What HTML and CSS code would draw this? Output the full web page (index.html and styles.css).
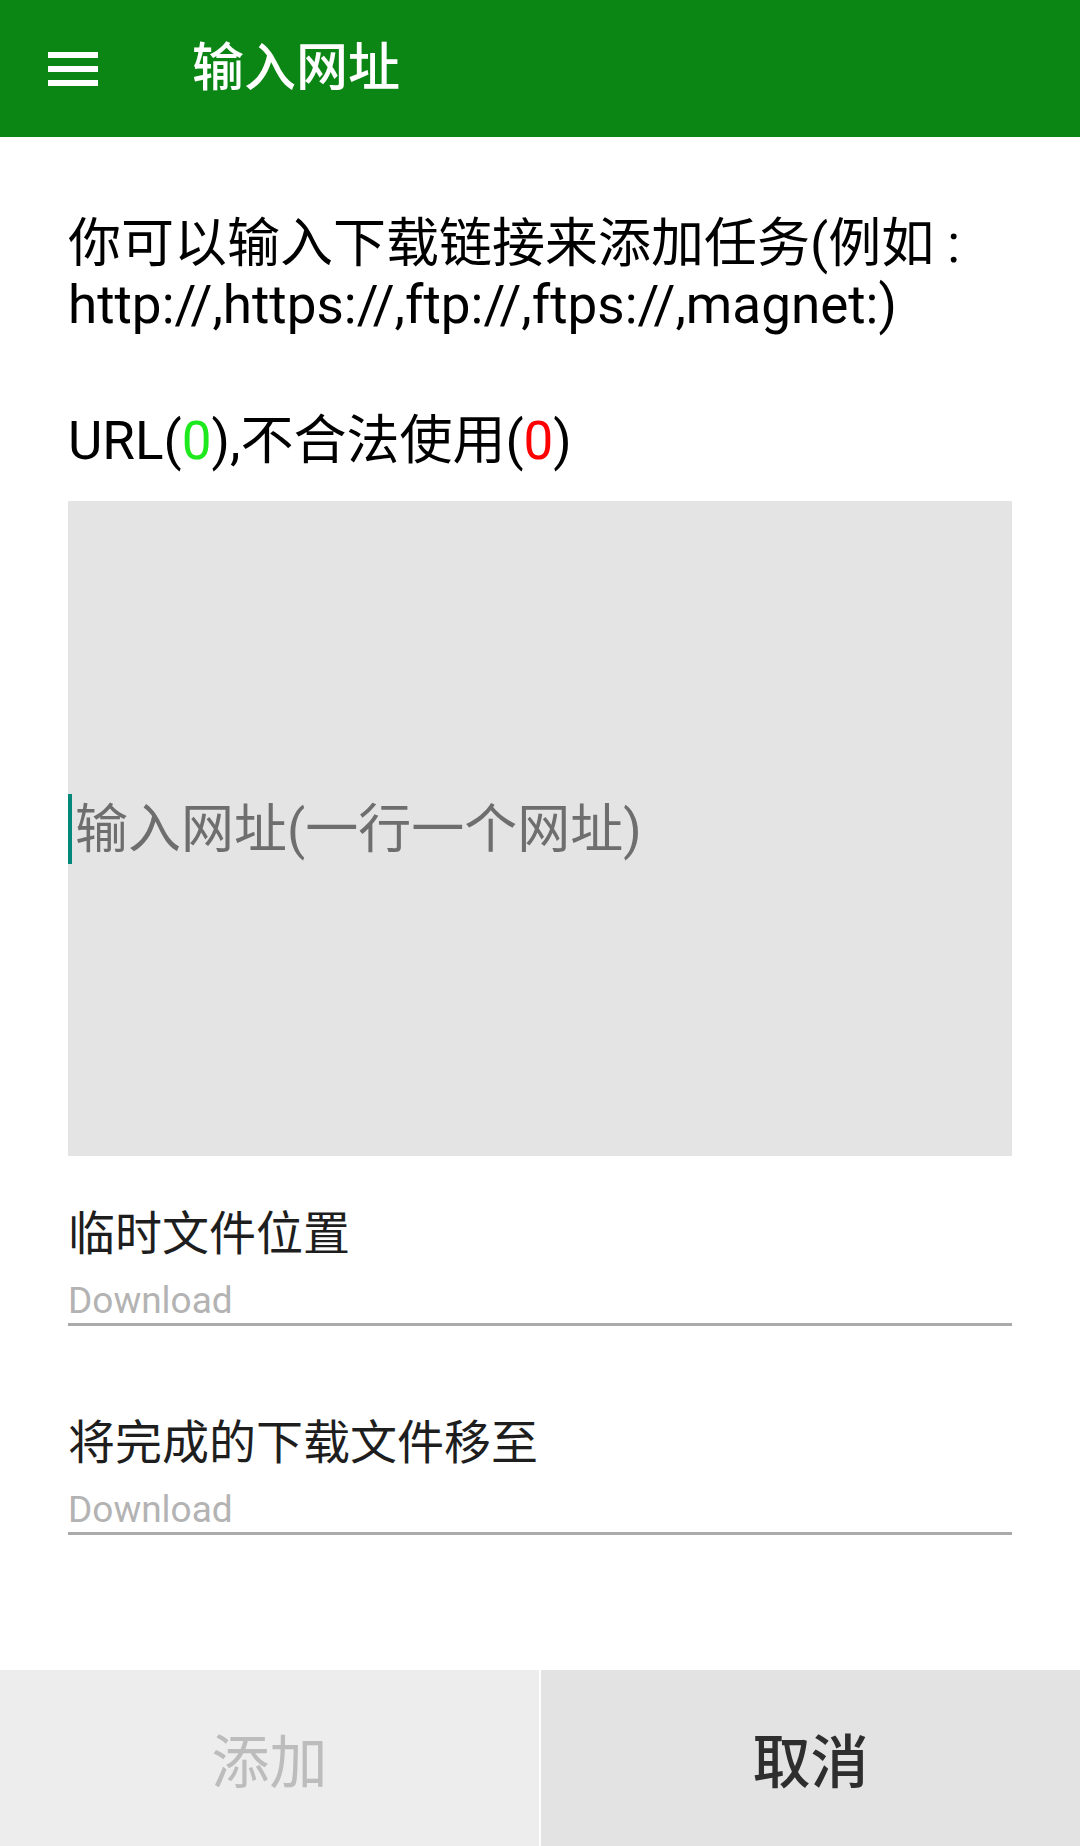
FILE: index.html
```html
<!DOCTYPE html>
<html lang="zh-CN">
<head>
<meta charset="utf-8">
<title>输入网址</title>
<link rel="stylesheet" href="styles.css">
</head>
<body>
<div class="app">
  <header class="toolbar">
    <svg class="menu-icon" width="50" height="34" viewBox="0 0 50 34" aria-hidden="true">
      <rect x="0" y="0" width="50" height="6" fill="#fff"/>
      <rect x="0" y="14" width="50" height="6" fill="#fff"/>
      <rect x="0" y="28" width="50" height="6" fill="#fff"/>
    </svg>
    <h1 class="title">输入网址</h1>
  </header>
  <main class="content">
    <p class="intro">你可以输入下载链接来添加任务(例如 :<br>http://,https://,ftp://,ftps://,magnet:)</p>
    <p class="count">URL(<span class="ok">0</span>),不合法使用(<span class="bad">0</span>)</p>
    <div class="urlbox">
      <span class="caret"></span>
      <span class="placeholder">输入网址(一行一个网址)</span>
    </div>
    <div class="field first">
      <div class="label">临时文件位置</div>
      <div class="value">Download</div>
    </div>
    <div class="field second">
      <div class="label">将完成的下载文件移至</div>
      <div class="value">Download</div>
    </div>
  </main>
  <footer class="actions">
    <button class="btn add">添加</button>
    <button class="btn cancel">取消</button>
  </footer>
</div>
</body>
</html>
```

FILE: styles.css
```css
html, body {
  margin: 0;
  padding: 0;
  background: #ffffff;
}

body {
  font-family: Roboto, "Noto Sans CJK SC", sans-serif;
  color: #000;
}

.app {
  display: flex;
  flex-direction: column;
  height: 100vh;
}

.toolbar {
  flex: none;
  height: 137px;
  background: #0b8614;
  display: flex;
  align-items: center;
  padding-left: 48px;
  gap: 94px;
  box-sizing: border-box;
}

.menu-icon {
  display: block;
  flex: none;
}

.title {
  margin: 0;
  color: #fff;
  font-size: 52px;
  line-height: 61px;
  font-weight: 500;
}

.content {
  flex: 1;
  padding: 0 68px;
}

.intro,
.count {
  font-size: 53px;
  line-height: 61px;
  color: #000;
}

.intro { margin: 77px 0 0; }
.count { margin: 75px 0 0; }

.ok { color: #1ee81e; }
.bad { color: #ff0000; }

.urlbox {
  margin-top: 29px;
  height: 655px;
  background: #e4e4e4;
  display: flex;
  align-items: center;
}

.caret {
  flex: none;
  width: 4px;
  height: 70px;
  background: #00897b;
}

.placeholder {
  margin-left: 3px;
  margin-top: 4px;
  font-size: 53px;
  line-height: 61px;
  color: #6e6e6e;
}

.field.first { margin-top: 50px; }
.field.second { margin-top: 89px; }

.label {
  font-size: 47px;
  line-height: 55px;
  color: #1e1e1e;
}

.value {
  margin-top: 18px;
  font-size: 37px;
  line-height: 43px;
  color: #b3b3b3;
  padding-bottom: 1px;
  border-bottom: 3px solid #ababab;
}

.actions {
  flex: none;
  display: flex;
  height: 176px;
}

.btn {
  flex: 1 1 0;
  border: 0;
  margin: 0;
  padding: 0;
  font-family: Roboto, "Noto Sans CJK SC", sans-serif;
  font-size: 58px;
}

.btn.add {
  background: #ededed;
  color: #bcbcbc;
}

.btn.cancel {
  background: #e3e3e3;
  color: #2e2e2e;
  font-weight: 500;
  border-left: 2px solid #ffffff;
}
```
